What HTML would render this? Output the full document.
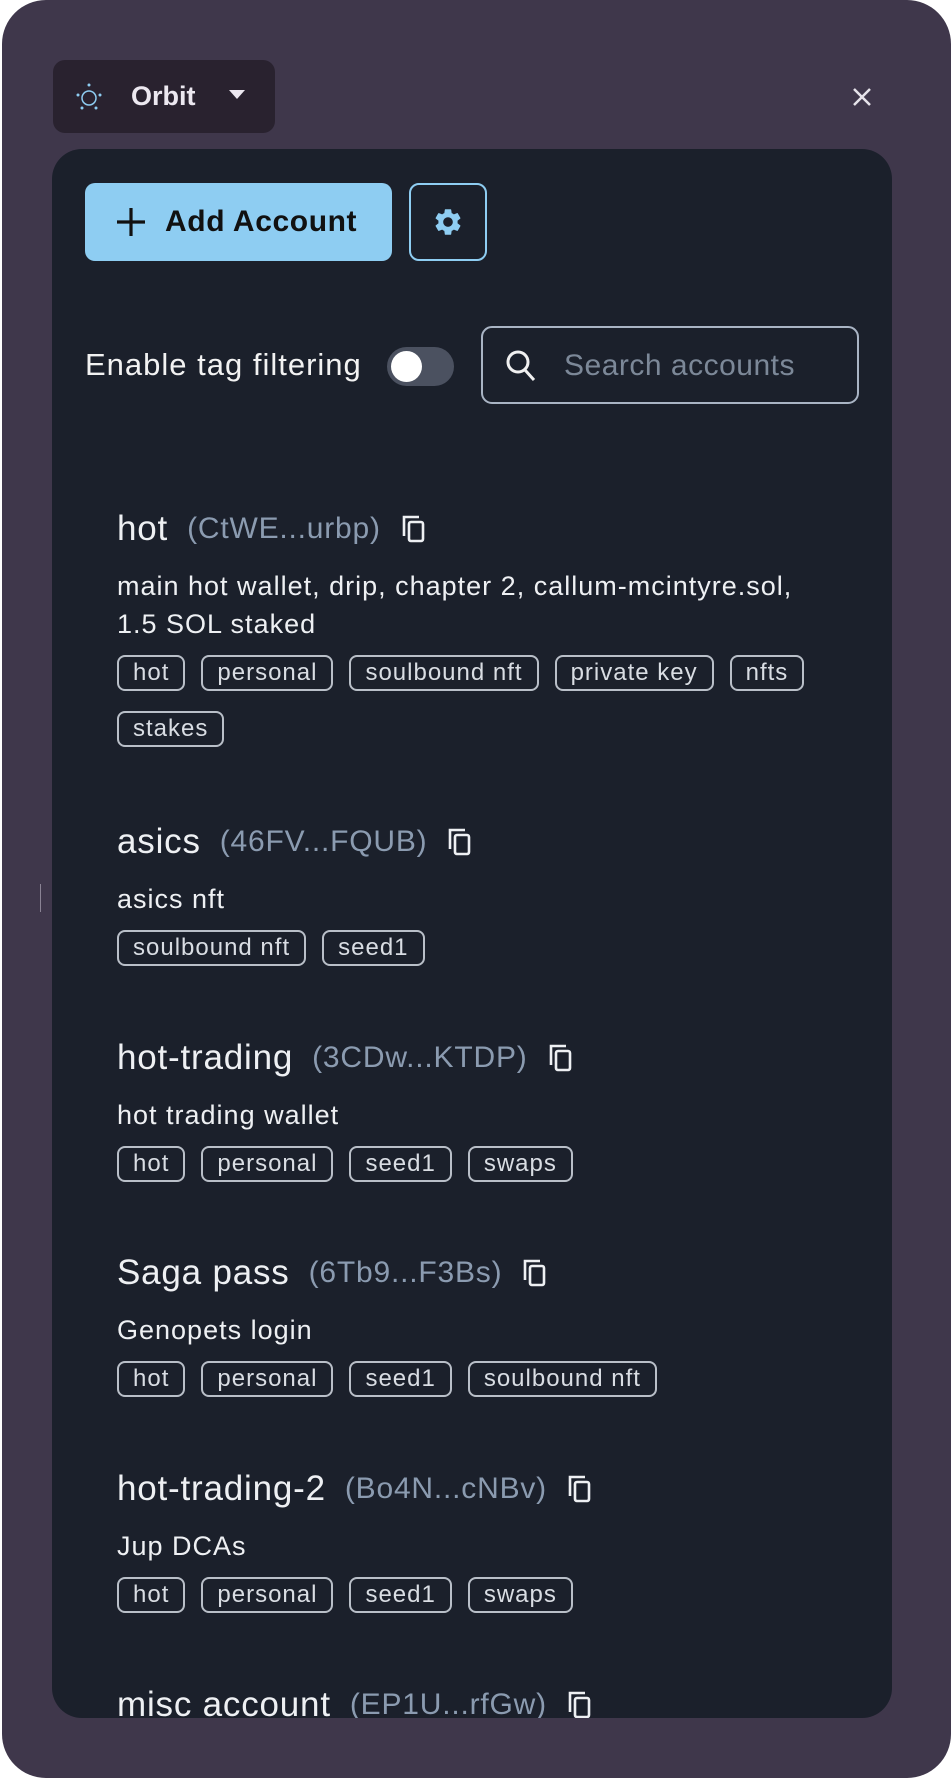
<!DOCTYPE html>
<html><head><meta charset="utf-8"><style>
*{box-sizing:border-box;margin:0;padding:0}
html,body{width:952px;height:1778px;background:#fff;overflow:hidden;font-family:"Liberation Sans",sans-serif}
.outer{position:absolute;left:2px;top:0;width:949px;height:1778px;background:#3f374b;border-radius:44px}
.orbit{position:absolute;left:53px;top:60px;width:222px;height:73px;background:#29222f;border-radius:12px;color:#ece8f0;font-weight:bold;font-size:27px}
.close{position:absolute;left:850px;top:85px}
.inner{position:absolute;left:52px;top:149px;width:840px;height:1569px;background:#1b202b;border-radius:30px;overflow:hidden}
.add{position:absolute;left:33px;top:34px;width:307px;height:78px;background:#8ecdf2;border-radius:10px;color:#111;font-weight:bold;font-size:30px;letter-spacing:.6px}
.gear{position:absolute;left:357px;top:34px;width:78px;height:78px;border:2px solid #8ecdf2;border-radius:10px}
.lbl{position:absolute;left:33px;top:198px;color:#f2f2f2;font-size:31px;line-height:35px;letter-spacing:1px}
.tog{position:absolute;left:335px;top:198px;width:67px;height:39px;background:#4b5160;border-radius:20px}
.tog i{position:absolute;left:4px;top:4px;width:31px;height:31px;background:#fff;border-radius:50%}
.search{position:absolute;left:429px;top:177px;width:378px;height:78px;border:2px solid #a9b4c4;border-radius:11px;overflow:hidden}
.search span{position:absolute;left:81px;top:21px;color:#7c8898;font-size:30px;letter-spacing:.5px;white-space:nowrap;width:236px;overflow:hidden}
.acc{position:absolute;left:65px;width:720px}
.nm{height:40px;display:flex;align-items:center;white-space:nowrap}
.nm b{font-weight:normal;color:#eef0f3;font-size:35px;letter-spacing:.8px}
.nm em{font-style:normal;color:#8b9bb0;font-size:30px;letter-spacing:.8px;margin-left:19px}
.nm svg{margin-left:20px}
.ds{color:#eef0f3;font-size:27px;letter-spacing:1px;line-height:38px;margin-top:18px}
.tags{display:flex;flex-wrap:wrap;gap:20px 16px;margin-top:12px}
.tags span{border:2px solid #b9bfc8;border-radius:8px;color:#d9dde3;font-size:24px;letter-spacing:1px;height:36px;line-height:32px;padding:0 14px}
</style></head><body>
<div class="outer"></div>
<div style="position:absolute;left:40px;top:884px;width:1px;height:28px;background:#8a8394"></div>
<div class="orbit">
<svg style="position:absolute;left:22px;top:22px" width="28" height="30" viewBox="0 0 28 30"><circle cx="14" cy="16" r="7" fill="none" stroke="#8ecdf2" stroke-width="1.5"/><circle cx="14" cy="3" r="1.5" fill="#8ecdf2"/><circle cx="3" cy="13" r="1.5" fill="#8ecdf2"/><circle cx="25" cy="13" r="1.5" fill="#8ecdf2"/><circle cx="7" cy="26" r="1.5" fill="#8ecdf2"/><circle cx="21" cy="26" r="1.5" fill="#8ecdf2"/></svg>
<span style="position:absolute;left:78px;top:21px">Orbit</span>
<svg style="position:absolute;left:176px;top:30px" width="16" height="10"><path d="M0 0h16L8 9z" fill="#ece8f0"/></svg>
</div>
<svg class="close" width="24" height="24" viewBox="0 0 24 24"><path d="M4 4L20 20M20 4L4 20" stroke="#e6e3ea" stroke-width="2.5"/></svg>
<div class="inner">
<div class="add"><svg style="position:absolute;left:30px;top:23px" width="32" height="32"><path d="M16 2v28M2 16h28" stroke="#111" stroke-width="3.2"/></svg><span style="position:absolute;left:80px;top:22px">Add Account</span></div>
<div class="gear"><svg style="position:absolute;left:21px;top:21px" width="32" height="32" viewBox="0 0 24 24"><path fill="#8ecdf2" d="M19.14 12.94c.04-.3.06-.61.06-.94 0-.32-.02-.64-.07-.94l2.030-1.58a.49.49 0 0 0 .12-.61l-1.92-3.32a.488.488 0 0 0-.59-.22l-2.39.96c-.5-.38-1.03-.7-1.62-.94l-.36-2.54a.484.484 0 0 0-.48-.41h-3.84c-.24 0-.43.17-.47.41l-.36 2.54c-.59.24-1.130.57-1.62.94l-2.39-.96c-.22-.08-.47 0-.59.22L2.74 8.87c-.12.21-.08.47.12.61l2.03 1.58c-.05.3-.09.63-.09.94s.02.64.07.94l-2.03 1.58a.49.49 0 0 0-.12.61l1.92 3.32c.12.22.37.29.59.22l2.39-.96c.5.38 1.03.7 1.62.94l.36 2.54c.05.24.24.41.48.41h3.84c.24 0 .44-.17.47-.41l.36-2.54c.59-.24 1.13-.56 1.62-.94l2.39.96c.22.08.47 0 .59-.22l1.92-3.32c.12-.22.07-.47-.12-.61l-2.01-1.58zM12 15.6c-1.98 0-3.6-1.62-3.6-3.6s1.62-3.6 3.6-3.6 3.6 1.62 3.6 3.6-1.62 3.6-3.6 3.6z"/></svg></div>
<div class="lbl">Enable tag filtering</div>
<div class="tog"><i></i></div>
<div class="search"><svg style="position:absolute;left:22px;top:21px" width="32" height="34" viewBox="0 0 32 34"><circle cx="13" cy="13" r="10" fill="none" stroke="#f0f0f0" stroke-width="3"/><path d="M20 21l9 10" stroke="#f0f0f0" stroke-width="3"/></svg><span>Search accounts</span></div>

<div class="acc" style="top:360px"><div class="nm"><b>hot</b><em>(CtWE...urbp)</em><svg width="26" height="30" viewBox="0 0 26 30"><path d="M3 22V3h15" fill="none" stroke="#eef0f3" stroke-width="2.6"/><rect x="8" y="8" width="14" height="19" rx="2" fill="none" stroke="#eef0f3" stroke-width="2.6"/></svg></div>
<div class="ds">main hot wallet, drip, chapter 2, callum-mcintyre.sol,<br>1.5 SOL staked</div>
<div class="tags"><span>hot</span><span>personal</span><span>soulbound nft</span><span>private key</span><span>nfts</span><span>stakes</span></div></div>

<div class="acc" style="top:673px"><div class="nm"><b>asics</b><em>(46FV...FQUB)</em><svg width="26" height="30" viewBox="0 0 26 30"><path d="M3 22V3h15" fill="none" stroke="#eef0f3" stroke-width="2.6"/><rect x="8" y="8" width="14" height="19" rx="2" fill="none" stroke="#eef0f3" stroke-width="2.6"/></svg></div>
<div class="ds">asics nft</div>
<div class="tags"><span>soulbound nft</span><span>seed1</span></div></div>

<div class="acc" style="top:889px"><div class="nm"><b>hot-trading</b><em>(3CDw...KTDP)</em><svg width="26" height="30" viewBox="0 0 26 30"><path d="M3 22V3h15" fill="none" stroke="#eef0f3" stroke-width="2.6"/><rect x="8" y="8" width="14" height="19" rx="2" fill="none" stroke="#eef0f3" stroke-width="2.6"/></svg></div>
<div class="ds">hot trading wallet</div>
<div class="tags"><span>hot</span><span>personal</span><span>seed1</span><span>swaps</span></div></div>

<div class="acc" style="top:1104px"><div class="nm"><b>Saga pass</b><em>(6Tb9...F3Bs)</em><svg width="26" height="30" viewBox="0 0 26 30"><path d="M3 22V3h15" fill="none" stroke="#eef0f3" stroke-width="2.6"/><rect x="8" y="8" width="14" height="19" rx="2" fill="none" stroke="#eef0f3" stroke-width="2.6"/></svg></div>
<div class="ds">Genopets login</div>
<div class="tags"><span>hot</span><span>personal</span><span>seed1</span><span>soulbound nft</span></div></div>

<div class="acc" style="top:1320px"><div class="nm"><b>hot-trading-2</b><em>(Bo4N...cNBv)</em><svg width="26" height="30" viewBox="0 0 26 30"><path d="M3 22V3h15" fill="none" stroke="#eef0f3" stroke-width="2.6"/><rect x="8" y="8" width="14" height="19" rx="2" fill="none" stroke="#eef0f3" stroke-width="2.6"/></svg></div>
<div class="ds">Jup DCAs</div>
<div class="tags"><span>hot</span><span>personal</span><span>seed1</span><span>swaps</span></div></div>

<div class="acc" style="top:1536px"><div class="nm"><b>misc account</b><em>(EP1U...rfGw)</em><svg width="26" height="30" viewBox="0 0 26 30"><path d="M3 22V3h15" fill="none" stroke="#eef0f3" stroke-width="2.6"/><rect x="8" y="8" width="14" height="19" rx="2" fill="none" stroke="#eef0f3" stroke-width="2.6"/></svg></div></div>
</div>
</body></html>
